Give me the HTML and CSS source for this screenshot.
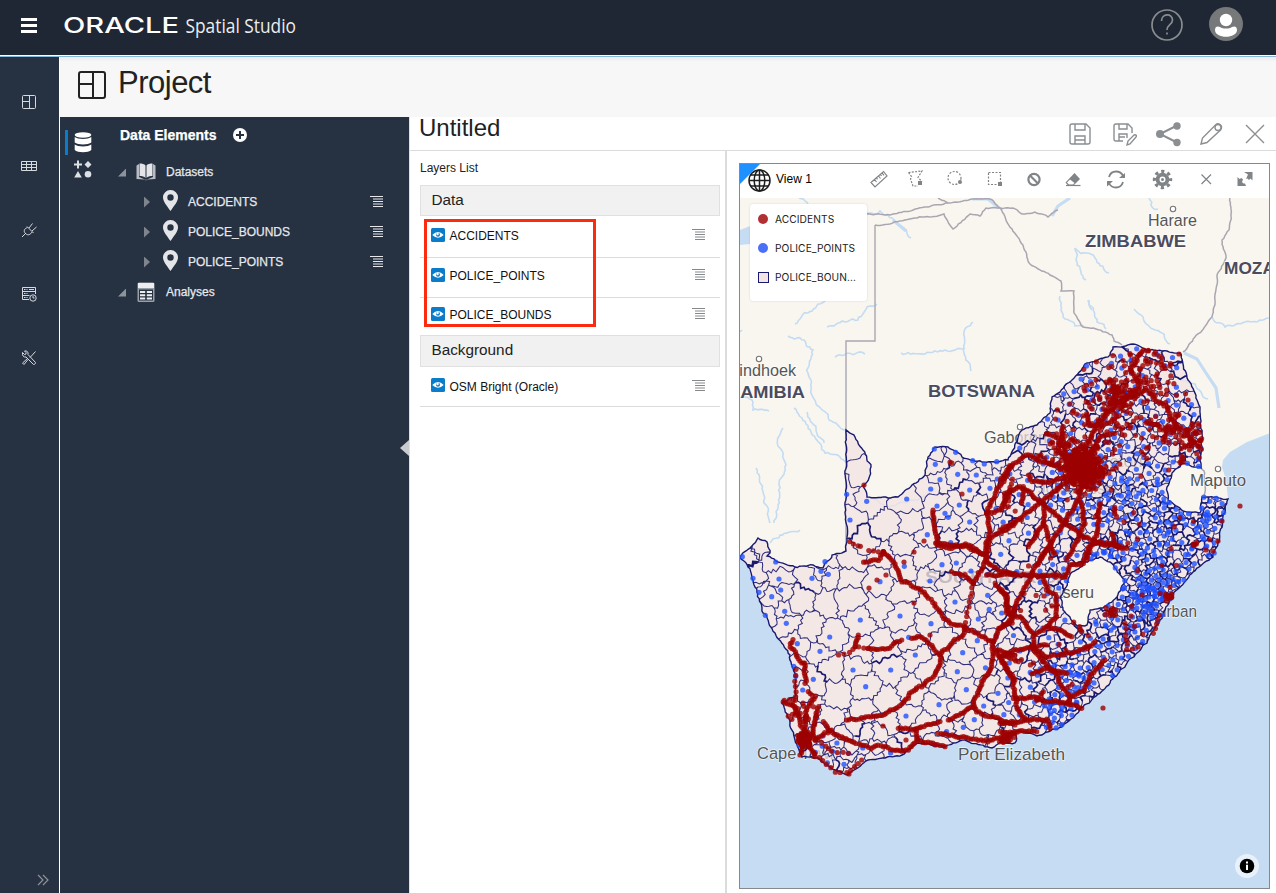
FILE: index.html
```html
<!DOCTYPE html>
<html lang="en">
<head>
<meta charset="utf-8">
<title>Spatial Studio</title>
<link rel="stylesheet" href="styles.css">
</head>
<body>
<svg class="defs" aria-hidden="true">
  <symbol id="grid" viewBox="0 0 28 28"><g fill="none" stroke="currentColor" stroke-width="2"><rect x="1" y="1" width="26" height="26" rx="2"/><path d="M15 1v26M1 13h14"/></g></symbol>
  <symbol id="list" viewBox="0 0 13 11"><path d="M0 .5h13M3 3h10M3 5.500h10M3 8h10M3 10.500h10" stroke="currentColor" stroke-width="1.200"/></symbol>
  <symbol id="pin" viewBox="0 0 15 21"><path fill="currentColor" fill-rule="evenodd" d="M7.500 0A7.400 7.400 0 0 0 0 7.500C0 11.500 4 16 7.500 21C11 16 15 11.500 15 7.500A7.400 7.400 0 0 0 7.500 0ZM7.500 4.300a3.200 3.200 0 1 1 0 6.400a3.200 3.200 0 1 1 0-6.400Z"/></symbol>
  <symbol id="eye" viewBox="0 0 14 14"><rect width="14" height="14" rx="1.500" fill="#0a7cc9"/><path d="M1.300 7Q7 1 12.700 7Q7 12.500 1.300 7Z" fill="#fff"/><circle cx="7" cy="6.700" r="2" fill="#0a7cc9"/><circle cx="6.600" cy="6" r="1.200" fill="#fff"/></symbol>
</svg>

<header class="topbar">
  <svg class="burger" viewBox="0 0 16 16"><path d="M0 1.500h16M0 7.500h16M0 13.500h16" stroke="#fff" stroke-width="3"/></svg>
  <svg class="brand" viewBox="0 0 236 30">
    <text class="brand-oracle" x="-1" y="21" textLength="116" lengthAdjust="spacingAndGlyphs">ORACLE</text>
    <text class="brand-product" x="121.500" y="21" textLength="110.500" lengthAdjust="spacingAndGlyphs">Spatial Studio</text>
  </svg>
  <svg class="help" viewBox="0 0 32 32"><g fill="none" stroke="#8a8d90" stroke-width="1.700"><circle cx="16" cy="16" r="15"/><path d="M10.500 12c0-8 11-8 11-1 0 5-5.500 4.500-5.500 10"/><path d="M16 23.500v2"/></g></svg>
  <svg class="avatar" viewBox="0 0 34 34"><circle cx="17" cy="17" r="17" fill="#76787a"/><circle cx="17" cy="13" r="6.200" fill="#fff"/><path d="M6 23c0-4 3-4 5-3 3 2 9 2 12 0 2-1 5-1 5 3 0 9-22 9-22 0Z" fill="#fff"/></svg>
</header>

<div class="shell">
  <nav class="rail">
    <svg class="rail-icon" viewBox="0 0 16 16"><g><rect x="1.500" y="1.500" width="13" height="13" rx="1"/><path d="M8.500 1.500v13M1.500 7.500h7"/></g></svg>
    <svg class="rail-icon" viewBox="0 0 16 16"><path d="M.500 3.500h15v9H.500zM.500 6.500h15M.500 9.500h15M5.500 3.500v9M10.500 3.500v9"/></svg>
    <svg class="rail-icon" viewBox="0 0 16 16"><path d="M1 15l4-4M6 4.500l6.500 6.500M6.500 5.500c-3 1-4.500 3.500-2 6s5 1 6.500-1.500M8 6l3.500-4.500M11 9l4.500-4"/></svg>
    <svg class="rail-icon" viewBox="0 0 16 16"><path d="M8 13.500H1.500v-12h13V8M1.500 5.500h13M1.500 9.500h7M3 3.500h1.500M5.500 3.500h1M8 3.500h5M3 7.500h1.500M5.500 7.500h1M3 11.500h1.500M5.500 11.500h1"/><circle cx="12" cy="12" r="3.200"/><path d="M12 10v2h1.500"/></svg>
    <svg class="rail-icon" viewBox="0 0 16 16"><path d="M14.500 1.500L9 7.500M7 9.500l-4 5-1.500-1.500 5-4.500M1.500 2.500l2 2 1.500-.500v-1.500L3.500 1C6 .500 7.500 2 7 4.500l7.500 8c0 1.500-1 2-2 2L5 7C2.500 7.500 1 5.500 1.500 2.500Z"/></svg>
    <svg class="rail-more" viewBox="0 0 12 12"><path d="M1 1l5 5-5 5M6 1l5 5-5 5"/></svg>
  </nav>

  <div class="page">
    <div class="titlebar">
      <svg class="title-icon"><use href="#grid"/></svg>
      <h1>Project</h1>
    </div>
    <div class="workspace">
      <aside class="elements">
        <div class="tabs">
          <div class="tab tab-active"><svg viewBox="0 0 18 21"><g fill="#fff"><ellipse cx="9" cy="3" rx="8.300" ry="2.700"/><path d="M.700 5c3 2.500 13.600 2.500 16.600 0v5.500c-3 2.500-13.600 2.500-16.600 0Z"/><path d="M.700 12.500c3 2.500 13.600 2.500 16.600 0V18c-3 3-13.600 3-16.600 0Z"/></g></svg></div>
          <div class="tab"><svg viewBox="0 0 18 18"><path d="M4 0v8M0 4h8" stroke="#dde0e4" stroke-width="2"/><path d="M14 .500L17.500 4 14 7.500 10.500 4ZM4 10.500L7.800 17H.200Z" fill="#dde0e4"/><circle cx="14" cy="13.700" r="3.300" fill="#dde0e4"/></svg></div>
        </div>
        <div class="tree">
          <div class="tree-head"><b>Data Elements</b><svg class="add" viewBox="0 0 14 14"><circle cx="7" cy="7" r="7" fill="#fff"/><path d="M7 3v8M3 7h8" stroke="#263142" stroke-width="2"/></svg></div>
          <div class="node">
            <i class="open"></i>
            <svg class="kind" viewBox="0 0 20 18"><path d="M.500 2.500L3 1v13l6 2.500 1 .500 1-.500 6-2.500V1l2.500 1.500v13.500L11.500 16.500 10 17.500 8.500 16.500.500 16Z" fill="#b9bdc3"/><path d="M3.500 .500c2.500 0 5 .500 6 2v12.500c-1-1.500-3.500-2-6-2ZM16.500 .500c-2.500 0-5 .500-6 2v12.500c1-1.500 3.500-2 6-2Z" fill="#e3e5e8"/></svg>
            <span>Datasets</span>
          </div>
          <div class="leaf"><i class="shut"></i><svg class="pin"><use href="#pin"/></svg><span>ACCIDENTS</span><svg class="menu"><use href="#list"/></svg></div>
          <div class="leaf"><i class="shut"></i><svg class="pin"><use href="#pin"/></svg><span>POLICE_BOUNDS</span><svg class="menu"><use href="#list"/></svg></div>
          <div class="leaf"><i class="shut"></i><svg class="pin"><use href="#pin"/></svg><span>POLICE_POINTS</span><svg class="menu"><use href="#list"/></svg></div>
          <div class="node">
            <i class="open"></i>
            <svg class="kind" viewBox="0 0 20 20"><rect x="1.500" y=".500" width="17" height="19.500" rx="1.500" fill="#9aa0a8"/><path d="M2 1h16v5H2z" fill="#eceef0"/><path d="M3 7.500h14v11H3z" fill="#263142"/><path d="M4 9h5.200v2H4zM10.800 9H16v2h-5.200zM4 12.200h5.200v2H4zM10.800 12.200H16v2h-5.200zM4 15.400h5.200v2H4zM10.800 15.400H16v2h-5.200z" fill="#eceef0"/></svg>
            <span>Analyses</span>
          </div>
        </div>
        <div class="collapse"></div>
      </aside>

      <main class="editor">
        <div class="editor-head">
          <h2>Untitled</h2>
          <div class="actions">
            <svg viewBox="0 0 26 26"><path d="M3 5a2 2 0 0 1 2-2h14l4 4v14a2 2 0 0 1-2 2H5a2 2 0 0 1-2-2ZM8 3v6h10V3M8 23v-8h10v8M8 19h10"/></svg>
            <svg viewBox="0 0 26 26"><path d="M12 20H5a2 2 0 0 1-2-2V5a2 2 0 0 1 2-2h12l4 4v5M8 3v5h8V3M8 20v-7h8v4M8 16h6M16 24l1-4 6-6c2-1 3 1 2 2l-6 7Z"/></svg>
            <svg viewBox="0 0 26 26"><path d="M22 4.500L5 13l17 8.500" stroke-width="2"/><g fill="#8b8f92" stroke="none"><circle cx="22" cy="5" r="3.700"/><circle cx="5" cy="13" r="4"/><circle cx="22" cy="21.500" r="3.700"/></g></svg>
            <svg viewBox="0 0 26 26"><path d="M3 23l1.500-6L17.500 4c3-3 8 1 5 5L9 21.500Z"/><circle cx="20" cy="6.500" r="3"/></svg>
            <svg viewBox="0 0 26 26"><path d="M4 4l18 18M22 4L4 22"/></svg>
          </div>
        </div>
        <div class="editor-body">
          <section class="layers">
            <div class="layers-title">Layers List</div>
            <div class="group group-data">Data</div>
            <div class="layer layer-first"><svg class="eye"><use href="#eye"/></svg><span>ACCIDENTS</span><svg class="menu"><use href="#list"/></svg></div>
            <div class="layer"><svg class="eye"><use href="#eye"/></svg><span>POLICE_POINTS</span><svg class="menu"><use href="#list"/></svg></div>
            <div class="layer layer-last"><svg class="eye"><use href="#eye"/></svg><span>POLICE_BOUNDS</span><svg class="menu"><use href="#list"/></svg></div>
            <div class="group">Background</div>
            <div class="layer layer-base"><svg class="eye"><use href="#eye"/></svg><span>OSM Bright (Oracle)</span><svg class="menu"><use href="#list"/></svg></div>
            <div class="highlight"></div>
          </section>

          <section class="view">
            <div class="corner"></div>
            <div class="view-head">
              <svg class="globe" viewBox="0 0 23 23"><g fill="none" stroke="#1e1e1e" stroke-width="1.500"><circle cx="11.500" cy="11.500" r="10.500"/><ellipse cx="11.500" cy="11.500" rx="5.300" ry="10.500"/><path d="M11.500 1v21M1 11.500h21M3 6h17M3 17h17"/></g></svg>
              <span class="view-name">View 1</span>
              <div class="tools">
                <svg viewBox="0 0 24 24"><path d="M4 15.500L16.500 4.500l3.500 4.500L8 20ZM7.500 12.500l2 2.500M9.500 10.800l1 1.500M11.500 9l2 2.500M13.500 7.300l1 1.500M15 5.800l2 2.500"/></svg>
                <svg viewBox="0 0 24 24"><path stroke-dasharray="2 1.300" d="M4.500 5.500L18 4l-4 6.500 4 4M4.500 5.500l3 4-1 2.500 2.500 7h5"/><path d="M14 14h4v4h-4z" fill="#808487" stroke="none"/></svg>
                <svg viewBox="0 0 24 24"><circle cx="11.500" cy="11" r="6.500" stroke-dasharray="2 1.500"/><circle cx="17" cy="15" r="2" fill="#808487" stroke="none"/></svg>
                <svg viewBox="0 0 24 24"><path stroke-dasharray="2 1.500" d="M5.500 5.500h12v12h-12z"/><path d="M15 15h4v4h-4z" fill="#808487" stroke="none"/></svg>
                <svg viewBox="0 0 24 24"><circle cx="12" cy="12.500" r="5.600" stroke-width="2.200"/><path d="M8 8.500l8 8" stroke-width="2.200"/></svg>
                <svg viewBox="0 0 24 24"><path d="M4.500 15.500l9-9.500L19 12l-6.500 6.500H7Z" fill="#808487" stroke="none"/><path d="M9 12.500l4.500 3.500-1.500 1.500H8L6 15.500Z" fill="#fff" stroke="none"/><path d="M5 18.500h14.500"/></svg>
                <svg viewBox="0 0 24 24"><path d="M5 10c1-3.500 3.500-5.500 7-5.500 3 0 6 2 7 4.500M19 15c-1 3.500-3.500 5.500-7 5.500-3 0-6-2-7-4.500" stroke-width="1.800"/><path d="M21 6v5h-6ZM3 19.500v-5.500h6Z" fill="#808487" stroke="none"/></svg>
                <svg viewBox="0 0 24 24"><circle cx="12.500" cy="12.500" r="8.100" stroke-width="3.200" stroke-dasharray="3.200 3.162" stroke-dashoffset="1.600"/><circle cx="12.500" cy="12.500" r="4.900" stroke-width="3.800"/><circle cx="12.500" cy="12.500" r="1.500" fill="#808487" stroke="none"/></svg>
                <svg viewBox="0 0 24 24"><path d="M7.500 7.500l9.500 9.500M17 7.500L7.500 17"/></svg>
                <svg viewBox="0 0 24 24"><path d="M11 5h8.500v8.500l-2-2-1.500 1.500-1.500-1.500-1.500.500 2-4.500ZM4.500 10l2 2 2-1 1.500 1.500-1 2.500 1.500 1.500h1.500l1 2.500H4.500Z" fill="#808487" stroke="none"/></svg>
              </div>
            </div>
            <div class="map">
              <svg id="map" class="map-canvas" viewBox="740 198 529 690"></svg>
              <ul class="legend">
                <li><i class="dot dot-red"></i>ACCIDENTS</li>
                <li><i class="dot dot-blue"></i>POLICE_POINTS</li>
                <li><i class="square"></i>POLICE_BOUN...</li>
              </ul>
              <svg class="info" viewBox="0 0 24 24"><circle cx="12" cy="12" r="12" fill="#fff" fill-opacity=".6"/><circle cx="12" cy="12" r="7.300" fill="#000"/><path d="M12 10.700v5.300M12 7.500v2" stroke="#fff" stroke-width="2"/></svg>
            </div>
          </section>
        </div>
      </main>
    </div>
  </div>
</div>
<script src="map.js"></script>
</body>
</html>
```
FILE: styles.css
```css
* { box-sizing: border-box; }
body { margin: 0; height: 893px; display: flex; flex-direction: column; overflow: hidden; font-family: "Liberation Sans", Arial, sans-serif; font-size: 12px; color: #222; background: #fff; }
.defs { display: none; }
svg { display: block; flex: none; }

.topbar { height: 57px; flex: none; background: #1e2733; border-bottom: 1px solid #86b8d8; box-shadow: inset 0 -1px #fff; display: flex; align-items: flex-start; padding: 0 33px 0 21px; }
.burger { width: 16px; height: 16px; margin-top: 18px; }
.brand { width: 236px; height: 30px; margin: 12px auto 0 27px; fill: #fff; overflow: visible; }
.brand-oracle { font: 500 21px Inter, sans-serif; }
.brand-product { font: 400 19.5px "Open Sans", sans-serif; fill: #eceef0; }
.help { width: 32px; height: 32px; margin: 9px 26px 0 0; }
.avatar { width: 34px; height: 34px; margin-top: 7px; }

.shell { flex: 1; display: flex; min-height: 0; }
.rail { width: 60px; background: #263142; border-right: 1px solid #fff; display: flex; flex-direction: column; padding: 37px 0 7px 21px; gap: 48px; }
.rail-icon { width: 16px; height: 16px; fill: none; stroke: #d6d9dd; stroke-width: 1; }
.rail-more { width: 12px; height: 12px; margin: auto 0 0 16px; fill: none; stroke: #8d939b; stroke-width: 1.2; }

.page { flex: 1; display: flex; flex-direction: column; min-width: 0; }
.titlebar { height: 60px; background: linear-gradient(#ececef, #f7f7f7 5px); display: flex; padding: 14px 18px; gap: 12px; }
.title-icon { width: 28px; height: 28px; }
h1 { margin: -6px 0 0; font-size: 31px; line-height: 36px; font-weight: 400; letter-spacing: -.5px; }
.workspace { flex: 1; display: flex; min-height: 0; }

.elements { width: 349px; background: #263142; color: #e6e8eb; display: flex; position: relative; }
.tabs { width: 56px; padding: 13px 0 0 5px; }
.tab { height: 25px; padding-left: 9px; margin-bottom: 7px; display: flex; align-items: center; }
.tab svg { width: 18px; height: 21px; }
.tab-active { border-left: 3px solid #0a7cc9; padding-left: 6px; margin-bottom: 2px; }
.tree { flex: 1; padding: 7px 26px 0 4px; -webkit-text-stroke: .25px; }
.tree-head { height: 21px; display: flex; align-items: center; gap: 17px; color: #fff; font-size: 14px; }
.add { width: 14px; height: 14px; margin-top: 1px; }
.node { height: 30px; margin-top: 12px; display: flex; align-items: center; }
.leaf + .node { margin-top: 0; }
.open { width: 8px; height: 8px; margin: 1px 10px 0 -2px; background: #8d939b; clip-path: polygon(100% 0, 100% 100%, 0 100%); }
.kind { width: 20px; height: 20px; margin-right: 10px; }
.leaf { height: 30px; padding-left: 24px; display: flex; align-items: center; }
.shut { width: 6px; height: 11px; margin-right: 13px; background: #7f858c; clip-path: polygon(0 0, 100% 50%, 0 100%); }
.pin { width: 15px; height: 21px; margin: -3px 10px 0 0; }
.leaf .pin { color: #e3e5e8; }
.menu { width: 13px; height: 11px; margin-left: auto; }
.leaf .menu { margin-top: -2px; }
.collapse { position: absolute; right: 0; top: 323px; width: 9px; height: 16px; background: #c9cbce; clip-path: polygon(100% 0, 100% 100%, 0 50%); }

.editor { flex: 1; display: flex; flex-direction: column; border-left: 1px solid #e0e0e0; min-width: 0; }
.editor-head { height: 34px; border-bottom: 1px solid #dcdcdc; display: flex; justify-content: space-between; padding: 0 8px 0 9px; }
h2 { margin: -3px 0 0; font-size: 24px; line-height: 28px; font-weight: 400; }
.actions { display: flex; gap: 17.75px; padding-top: 4px; }
.actions svg { width: 26px; height: 26px; fill: none; stroke: #8b8f92; stroke-width: 1.4; }
.editor-body { flex: 1; display: flex; min-height: 0; }

.layers { width: 317px; border-right: 2px solid #dcdcdc; padding: 10px 5px 0 10px; position: relative; }
.layers-title { height: 24px; line-height: 14px; }
.group { height: 32px; background: #f1f1f1; border: 1px solid #e0e0e0; padding-left: 10.5px; line-height: 28px; font-size: 15.3px; }
.group-data { height: 31px; }
.layer { height: 40px; border-bottom: 1px solid #dcdcdc; padding: 10px 15px 0 11px; display: flex; align-items: flex-start; line-height: 16px; color: #111; }
.layer-first { height: 42px; padding-top: 12px; }
.layer-last { height: 37px; border: 0; padding-top: 9px; }
.layer-base { padding-top: 12px; }
.eye { width: 14px; height: 14px; margin-right: 4.5px; }
.layer-base .eye { margin-top: -1px; }
.layer .menu { color: #85898c; margin-top: 1px; }
.highlight { position: absolute; left: 13.5px; top: 67.5px; width: 172px; height: 108px; border: 3px solid #fb2b0f; }

.view { flex: 1; margin: 12px 6px 4px 12px; border: 1px solid #85898c; display: flex; flex-direction: column; position: relative; min-width: 0; }
.corner { position: absolute; left: 0; top: 0; width: 20px; height: 20px; background: #1e90ff; clip-path: polygon(0 0, 100% 0, 0 100%); }
.view-head { height: 34px; flex: none; display: flex; align-items: center; padding-left: 8px; position: relative; }
.globe { width: 23px; height: 23px; margin: -2px 5px 0 0; }
.view-name { width: 91px; margin-top: -4px; color: #000; }
.tools { display: grid; grid-template-columns: 37px 39px 40px 39px 39px 43px 46px 44px 39px 24px; margin-top: -4px; }
.tools svg { width: 24px; height: 24px; fill: none; stroke: #808487; stroke-width: 1.2; }
.map { flex: 1; position: relative; min-height: 0; overflow: hidden; background: #f9f6f0; }
.map-canvas { width: 100%; height: 100%; }
.legend { position: absolute; left: 10px; top: 6px; width: 117px; height: 97px; margin: 0; padding: 0 0 0 8px; list-style: none; background: #fff; border-radius: 3px; box-shadow: 0 0 2px rgba(0,0,0,.15); font: 10.2px Inter, sans-serif; letter-spacing: .08px; }
.legend li { height: 29.3px; display: flex; align-items: center; }
.dot { width: 10px; height: 10px; border-radius: 50%; margin-right: 7px; }
.dot-red { background: #b03034; }
.dot-blue { background: #4a70f8; }
.square { width: 11px; height: 11px; margin-right: 6px; background: #f3e5e5; border: 1px solid #191970; }
.info { position: absolute; right: 10px; bottom: 10px; width: 24px; height: 24px; }

.country { font: bold 17px "Liberation Sans", Arial, sans-serif; fill: #4b4b5e; }
.city { font: 16.7px "Liberation Sans", Arial, sans-serif; fill: #555; }
.country, .city { stroke: #fff; stroke-opacity: .7; stroke-width: 1.5px; paint-order: stroke; }
```
FILE: map.js
```js
const NS = 'http://www.w3.org/2000/svg';
const root = document.getElementById('map');
function add(tag, attrs, text) {
  const e = document.createElementNS(NS, tag);
  for (const k in attrs) e.setAttribute(k, attrs[k]);
  if (text) e.textContent = text;
  root.appendChild(e);
  return e;
}
let seed = 20;
function rnd() { seed = (seed * 1664525 + 1013904223) % 4294967296; return seed / 4294967296; }
function gauss() { return rnd() + rnd() + rnd() + rnd() - 2; }

/* Map tiles hold three units per pixel; each has its own origin. */
const TILES = { nw: [735, 300], ne: [1000, 300], sw: [735, 540], se: [1000, 540] };
function local(tile, flat) {
  const out = [];
  for (let i = 0; i < flat.length; i += 2) out.push([TILES[tile][0] + flat[i] / 3, TILES[tile][1] + flat[i + 1] / 3]);
  return out;
}
function pairs(flat) { const o = []; for (let i = 0; i < flat.length; i += 2) o.push([flat[i], flat[i + 1]]); return o; }
function d(pts, close) { return 'M' + pts.map(p => p[0].toFixed(1) + ' ' + p[1].toFixed(1)).join('L') + (close ? 'Z' : ''); }
function wiggle(a, b, amp) {
  const len = Math.hypot(b[0] - a[0], b[1] - a[1]), n = Math.max(1, Math.round(len / 2.4)), out = [a];
  const nx = -(b[1] - a[1]) / (len || 1), ny = (b[0] - a[0]) / (len || 1);
  let w = 0;
  for (let i = 1; i < n; i++) {
    w = w * .65 + (rnd() - .5) * amp * 1.7;
    out.push([a[0] + (b[0] - a[0]) * i / n + nx * w, a[1] + (b[1] - a[1]) * i / n + ny * w]);
  }
  return out;
}
function rough(pts, amp, close) {
  let o = [];
  const n = pts.length;
  for (let i = 0; i < n - (close ? 0 : 1); i++) o = o.concat(wiggle(pts[i], pts[(i + 1) % n], amp));
  if (!close) o.push(pts[n - 1]);
  return o;
}
function inside(p, poly) {
  let c = false;
  for (let i = 0, j = poly.length - 1; i < poly.length; j = i++) {
    const a = poly[i], b = poly[j];
    if ((a[1] > p[1]) !== (b[1] > p[1]) && p[0] < (b[0] - a[0]) * (p[1] - a[1]) / (b[1] - a[1]) + a[0]) c = !c;
  }
  return c;
}

/* Base map */
const sea = pairs([739,556,748,567,755,587,763,613,775,633,790,655,795,673,795,697,782,703,790,723,795,740,802,757,818,758,835,770,848,775,868,760,885,758,902,755,918,743,945,747,965,740,992,748,1015,743,1016,732,1037,736,1062,727,1083,707,1110,683,1127,663,1147,643,1160,620,1173,595,1193,572,1213,557,1218,543,1222,520,1228,499,1226,480,1222,467,1223,460,1230,452,1247,442,1270,433,1270,889,739,889]);
add('path', { d: d(sea, true), fill: '#c5dcf3' });
add('path', { d: 'M740 230L750 226V244L740 245Z', fill: '#c5dcf3' });
const rivers = [
  [799,198,808,204],[866,213,880,211,892,218,905,229,911,238],[1149,198,1152,207,1158,209],[1075,248,1076,260,1086,280],[1075,248,1095,258,1109,273],
  [795,324,808,313,818,304,829,300],[827,327,845,322,858,320,870,306,877,304],[788,336,804,340,813,350,808,373,816,404,829,420,846,430],[794,408,806,424,825,453,840,457,846,463],[807,412,824,443],[835,357,848,353,865,354],
  [901,353,925,354,945,350,965,348],[973,322,964,332,964,345,971,371],[783,428,778,446,786,465,779,485,778,505,774,523],[756,468,762,489,770,523],[770,543,780,535,800,530],
  [740,398,752,400,753,410,769,411],[740,332,742,330],[1060,296,1065,319,1075,326,1084,326],[1089,300,1097,322,1106,329],[1134,309,1148,325,1160,332,1170,344],[1212,317,1225,327,1245,322,1269,318],
  [867,499,895,506,920,498,935,488],[1178,379,1195,384,1208,399],[1088,300,1092,310]];
rivers.forEach(r => add('path', { d: d(rough(pairs(r), 1.6)), fill: 'none', stroke: '#c4dcf2', 'stroke-width': 1.6 }));
add('path', { d: 'M972 199L988 199L999 208M1052 216L1058 206L1070 198M893 220L906 231M1184 353L1197 359L1206 373L1216 388L1219 408', fill: 'none', stroke: '#c5dcf3', 'stroke-width': 3.2, 'stroke-linejoin': 'round' });
const frontiers = [
  [938,198,948,203],[1000,208,990,199,974,199,948,203,890,215,866,214],[1000,208,1013,208,1022,214,1035,212,1048,217,1058,210],
  [1000,208,986,208,980,216,970,214,953,229,944,214,905,220,890,224,875,225],
  [1000,208,1012,229,1023,245,1030,264,1050,275,1061,281,1061,291,1074,291,1074,313,1083,327,1096,329,1112,335,1114,341,1122,345],
  [1230,198,1231,214,1229,230,1222,240,1226,258,1217,277,1215,300,1212,317,1183,352],[1201,467,1204,471,1205,497]];
frontiers.forEach(r => add('path', { d: d(rough(pairs(r), .8)), fill: 'none', stroke: '#aaa6b1', 'stroke-width': 1.5 }));
add('path', { d: 'M875 225V341H846V551', fill: 'none', stroke: '#aaa6b1', 'stroke-width': 1.4 });
function label(cls, x, y, w, t) { add('text', { class: cls, x, y, textLength: w, lengthAdjust: 'spacingAndGlyphs' }, t); }
function town(x, y) { add('circle', { cx: x, cy: y, r: 2.7, fill: '#fff', stroke: '#777', 'stroke-width': 1.1 }); }
label('country', 1085, 247, 101, 'ZIMBABWE');
label('country', 1224, 274, 120, 'MOZAMBIQUE');
label('country', 928, 397, 107, 'BOTSWANA');
label('country', 727, 398, 78, 'NAMIBIA');
label('country', 925, 583, 145, 'SOUTH AFRICA');
label('city', 1148, 226, 49, 'Harare');
label('city', 724, 376, 72, 'Windhoek');
label('city', 984, 443, 72, 'Gaborone');
label('city', 1190, 486, 56, 'Maputo');
label('city', 1092, 467, 60, 'Pretoria');
label('city', 1038, 494, 98, 'Johannesburg');
label('city', 1040, 598, 54, 'Maseru');
label('city', 1147, 617, 50, 'Durban');
label('city', 757, 759, 82, 'Cape Town');
label('city', 958, 760, 107, 'Port Elizabeth');
town(1173, 209); town(759, 359); town(1218, 469); town(1020, 427);

/* National outline and the enclave cut out of it */
const outline = pairs([740,557,750,548,758,538,767,542,770,553,767,556,778,562,795,567,813,565,823,568,832,555,846,551,846,430,855,437,863,450,871,467,869,478,864,485,867,497,888,498,898,497,912,485,925,475,928,457,935,447,948,447,962,457,982,462,998,462,1008,460,1013,450,1022,430,1037,425,1050,413,1052,397,1072,380,1087,363,1110,355,1113,347,1133,344,1147,350,1167,351,1180,353,1188,380,1200,407,1202,433,1201,468,1183,463,1172,473,1167,487,1168,500,1183,511,1200,513,1202,497,1228,499,1222,520,1218,543,1213,557,1193,572,1173,595,1160,620,1147,643,1127,663,1110,683,1083,707,1062,727,1037,736,1025,732,1015,732,1015,743,1000,742,992,748,965,740,945,747,918,743,902,755,885,758,868,760,848,775,835,770,818,758,802,757,795,740,790,723,782,703,795,697,795,673,790,655,775,633,763,613,755,587,748,567]);
const enclave = pairs([1100,557,1110,562,1125,582,1117,597,1103,608,1090,610,1087,625,1078,626,1063,610,1060,597,1072,572,1085,562]);
const border = d(rough(outline, 1, true), true) + d(rough(enclave, 1, true), true);
const clip = add('clipPath', { id: 'land' });
const cp = document.createElementNS(NS, 'path');
cp.setAttribute('d', border); cp.setAttribute('clip-rule', 'evenodd');
clip.appendChild(cp);
add('path', { d: border, fill: '#f2e2e2', 'fill-opacity': .74, 'fill-rule': 'evenodd' });
const land = p => inside(p, outline) && !inside(p, enclave);

const stations = [
  ...local('nw', [335,583,395,604,515,597,345,660,601,493,615,539,724,525,587,567,704,570,673,615,704,666,577,704,647,728,668,523,640,652,765,565,787,537,822,722,598,447,662,457,713,482,748,492,785,485,606,618,630,640]),
  ...local('sw', [22,50,122,66,132,117,54,115,72,157,110,170,149,214,154,250,91,226,284,291,376,240,495,228,435,125,585,123,508,79,621,74,664,69,708,93,231,115,258,94,280,103,270,65,187,311,255,334,235,418,354,390,392,440,467,390,541,345,683,338,667,395,694,449,789,460,746,498,718,539,612,494,513,528,685,562,727,302,588,251,660,186,730,237,758,166,521,292,176,379,182,409,757,103,797,43,800,219,203,450,137,150])
];
const seeds = stations.slice(), marked = stations.map(() => true);
function spacing(x, y) {
  const durban = Math.hypot(x - 1160, y - 597), rand = Math.hypot(x - 1085, y - 470);
  if (y > 735 && x < 880) return 9;
  if (x < 940) return 20;
  if (durban < 32) return 4.6;
  if (x > 1105 && y > 490) return 6.2;
  if (x > 1035 && y > 650) return 6.5;
  if (x > 1090 && y > 380) return 7.5;
  if (rand < 50) return 7.5;
  if (x > 1040) return 10.5;
  if (x > 985) return 12.5;
  return 17;
}
for (let i = 0; i < 30000; i++) {
  const p = [740 + rnd() * 490, 344 + rnd() * 431];
  const near = spacing(p[0], p[1]);
  if (!land(p) || (p[0] > 1177 && p[1] < 400 && rnd() > .02)) continue;
  if (seeds.some(q => Math.hypot(q[0] - p[0], q[1] - p[1]) < near)) continue;
  seeds.push(p);
  marked.push(p[0] > 1040 ? rnd() < .75 : p[0] > 985 ? rnd() < .45 : p[1] > 730 && rnd() < .5);
}

/* District borders: Voronoi cells with roughened edges */
const seen = new Set();
let fine = '', bold = '';
seeds.forEach((s, i) => {
  let cell = [[s[0]-60,s[1]-60],[s[0]+60,s[1]-60],[s[0]+60,s[1]+60],[s[0]-60,s[1]+60]];
  seeds.forEach((q, j) => {
    const dx = q[0] - s[0], dy = q[1] - s[1];
    if (j === i || Math.abs(dx) > 100 || Math.abs(dy) > 100) return;
    const mid = (q[0]*q[0] + q[1]*q[1] - s[0]*s[0] - s[1]*s[1]) / 2, out = [];
    for (let k = 0; k < cell.length; k++) {
      const a = cell[k], b = cell[(k + 1) % cell.length];
      const fa = a[0]*dx + a[1]*dy - mid, fb = b[0]*dx + b[1]*dy - mid;
      if (fa <= 0) out.push(a);
      if ((fa < 0 && fb > 0) || (fa > 0 && fb < 0)) { const t = fa / (fa - fb); out.push([a[0]+(b[0]-a[0])*t, a[1]+(b[1]-a[1])*t]); }
    }
    cell = out;
  });
  for (let k = 0; k < cell.length; k++) {
    const a = cell[k], b = cell[(k + 1) % cell.length];
    const key = Math.round((a[0]+b[0])*2) + ',' + Math.round((a[1]+b[1])*2);
    if (seen.has(key)) continue;
    seen.add(key);
    const path = d([...wiggle(a, b, 3.4), b]);
    if (rnd() < (a[0] > 1090 && a[1] > 500 ? .45 : a[0] > 1000 ? .25 : .06)) bold += path; else fine += path;
  }
});
add('path', { d: fine, fill: 'none', stroke: '#191970', 'stroke-width': 1.05, 'stroke-opacity': .9, 'clip-path': 'url(#land)' });
add('path', { d: bold, fill: 'none', stroke: '#191970', 'stroke-width': 1.7, 'clip-path': 'url(#land)' });
add('path', { d: border, fill: 'none', stroke: '#191970', 'stroke-width': 1.4 });

/* Points */
function dots(list, fill, op) {
  list.forEach(p => add('circle', { cx: p[0].toFixed(1), cy: p[1].toFixed(1), r: 2.6, fill, 'fill-opacity': op }));
}
const blue = seeds.filter((s, i) => marked[i]);
for (let i = 0; i < 20; i++) { const p = [1158 + gauss() * 17, 594 + gauss() * 12]; if (land(p)) blue.push(p); }
for (let i = 0; i < 110; i++) { const p = [1090 + rnd() * 120, 480 + rnd() * 210]; if (land(p)) blue.push(p); }
for (let i = 0; i < 30; i++) { const p = [1040 + rnd() * 50, 665 + rnd() * 60]; if (land(p)) blue.push(p); }
dots(blue, '#1f50ff', .8);

const roads = [
  ['sw',[445,35,470,60,500,125,550,145,580,175,600,190,625,235,650,252,690,262,740,290,775,305]],['sw',[385,67,430,60,445,35]],
  ['sw',[400,325,450,328,480,308,500,300]],['sw',[530,294,555,290,590,315,615,345]],['sw',[360,320,370,285]],
  ['sw',[335,540,400,530,460,515,500,492,520,465,560,440,600,405,615,375,615,345,650,310,685,285,690,262]],['sw',[715,130,745,80,765,0]],['sw',[650,95,690,105,715,130]],
  ['sw',[600,10,650,15,690,15,750,45,760,70,800,95,840,100]],['sw',[780,130,815,165,820,215]],['sw',[775,305,770,380,740,425,715,490,725,515,760,530,840,555]],
  ['sw',[715,500,690,515,640,540]],['sw',[615,545,540,568,490,565]],['sw',[540,568,550,600,520,630,480,632,430,615,400,622,350,605,320,590,280,570,265,545]],['sw',[550,600,630,620]],
  ['sw',[610,580,700,595,760,605,840,580]],['sw',[175,300,165,320,185,350,210,370,210,430]],['sw',[145,485,180,500,195,540,210,590]],['sw',[220,455,240,470,215,510,205,590]],['sw',[250,500,235,560,240,600]],['sw',[205,590,240,650]],['sw',[240,600,290,570]],['sw',[205,590,195,645]],
  ['sw',[775,305,790,265,830,250,840,200]],['sw',[780,330,840,345]],['sw',[785,335,840,420]],
  ['nw',[595,630,605,735,650,745,700,735,750,765,765,690,755,640,790,560,830,500]],['nw',[755,640,800,630,825,570]],['nw',[765,715,840,670]],
  ['ne',[430,150,390,210,420,260,350,310,300,360,260,430,245,500]],['ne',[340,250,350,310,440,270,500,320,530,380]],['ne',[260,340,265,375,300,380,350,350]],['ne',[0,540,30,500,85,465,150,490,210,510,245,500]],['ne',[85,525,95,545,150,548,245,510]],
  ['ne',[0,690,60,655,130,600,180,560,245,520]],['ne',[15,620,15,580,60,560,130,610,190,670,250,710,300,730,380,745]],['ne',[70,560,65,610]],['ne',[245,500,240,590,185,680,120,775]],['ne',[130,610,130,670,85,740]],['ne',[130,670,160,760]],['ne',[240,600,255,670,220,740,200,780]],
  ['ne',[300,610,290,700,260,780]],['ne',[345,620,350,650]],['ne',[335,700,350,740]],['ne',[245,500,300,410,345,400]],['ne',[245,500,175,450,190,380]],['ne',[140,400,190,420,200,500]],['ne',[440,370,480,380]],['ne',[500,380,490,425]],
  ['se',[-40,105,0,105,60,105,95,105,195,110]],['se',[95,105,150,20]],['se',[95,105,50,190,30,240,0,265]],['se',[195,110,210,75,250,70,265,20,300,5,340,10,365,25]],
  ['se',[130,110,140,150,170,170,170,230,140,260,100,290,95,320,40,330,0,350]],['se',[0,150,20,180,20,220,60,230,100,280]],['se',[140,260,180,270,215,290]],['se',[95,320,140,350,200,340,240,330,285,305]],
  ['se',[95,320,120,350,160,390,180,430,210,470,200,490,110,480]],['se',[40,475,110,472]],['se',[95,400,140,385,200,400]],['se',[315,360,275,400,250,455,210,470]],['se',[200,490,245,505]],['se',[110,480,130,455]],
  ['se',[0,350,40,420,50,500,75,540,140,538,150,565]],['se',[75,540,40,545,0,550]],['se',[0,575,110,575]],['se',[95,320,140,315]],['se',[20,350,55,365]],['se',[240,260,245,275]]
];
const sparse = [['sw',[345,5,380,20,400,30,445,35]],['sw',[310,345,345,338,360,320,400,325]],['sw',[690,262,700,200,715,130]],['sw',[182,390,182,470]],['sw',[150,480,175,480]],['sw',[240,640,300,695,335,700,380,660]],['sw',[250,600,290,635,340,640]],['nw',[830,535,820,620]],['se',[480,225,460,280]],['se',[415,323,380,330,375,250]],['se',[215,435,205,440]],['ne',[480,260,500,270]]];
const red = [];
function trace(pts, step, jit) {
  for (let i = 0; i + 1 < pts.length; i++) {
    const a = pts[i], b = pts[i + 1], n = Math.max(1, Math.round(Math.hypot(b[0]-a[0], b[1]-a[1]) / step));
    for (let k = 0; k < n; k++) red.push([a[0]+(b[0]-a[0])*k/n+gauss()*jit, a[1]+(b[1]-a[1])*k/n+gauss()*jit]);
  }
  red.push(pts[pts.length - 1]);
}
roads.forEach(([t, f]) => trace(rough(local(t, f), 1.1, false), 2, .4));
sparse.forEach(([t, f]) => trace(local(t, f), 5, .8));
[[1083,468,13,300],[1082,468,24,130],[1116,394,14,45],[1150,368,22,45],[805,740,6,80],[1007,742,7,30],[1171,597,4,20],[1186,440,19,60],[1195,545,2,6],[1110,407,34,55],[1060,440,28,35],[1130,410,40,60],[1112,614,5,10],[1175,425,20,25],[800,715,12,20]].forEach(([x, y, s, n]) => {
  for (let i = 0; i < n; i++) { const p = [x + gauss() * s, y + gauss() * s]; if (land(p)) red.push(p); }
});
for (let i = 0; i < 90; i++) { const p = [1000 + rnd() * 215, 430 + rnd() * 240]; if (land(p)) red.push(p); }
red.push(...pairs([1240,506,1103,708,864,485,1179,354,1188,400,1222,521,1218,541,1213,551,1206,550,950,462,962,494,952,463,914,552,924,541,914,603,930,635,883,726,906,740,849,774,869,588,877,580,886,575,904,562]));
dots(red, '#9d0000', .8);
```
